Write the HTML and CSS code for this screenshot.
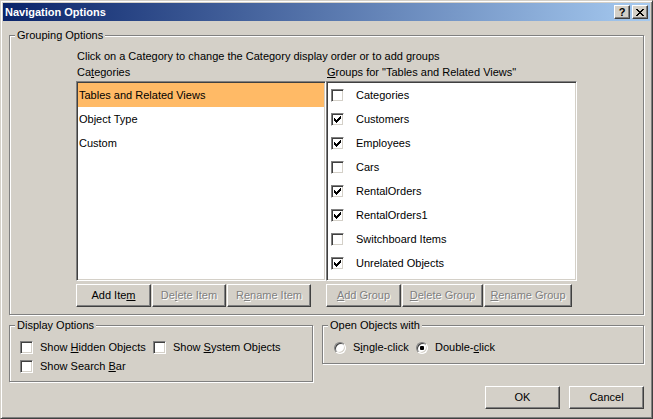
FILE: index.html
```html
<!DOCTYPE html>
<html>
<head>
<meta charset="utf-8">
<title>Navigation Options</title>
<link rel="stylesheet" href="styles.css">
</head>
<body>
<div class="window">
  <div class="titlebar">
    <span class="title">Navigation Options</span>
    <div class="tbtns">
      <div class="tbtn help">?</div>
      <div class="tbtn close">
        <svg width="8" height="7" viewBox="0 0 8 7" shape-rendering="crispEdges"><path d="M0 0h2v1h1v1h2v-1h1v-1h2v1h-1v1h-1v1h-1v1h1v1h1v1h1v1h-2v-1h-1v-1h-2v1h-1v1h-2v-1h1v-1h1v-1h1v-1h-1v-1h-1v-1h-1z" fill="#000"/></svg>
      </div>
    </div>
  </div>
  <div class="content">
    <div class="group grouping">
      <span class="legend">Grouping Options</span>
      <div class="intro">Click on a Category to change the Category display order or to add groups</div>
      <div class="cols">
        <div class="col col-left">
          <div class="label">Ca<u>t</u>egories</div>
          <div class="listbox">
            <div class="row sel">Tables and Related Views</div>
            <div class="row">Object Type</div>
            <div class="row">Custom</div>
          </div>
          <div class="btnrow">
            <div class="btn w75"><span>Add Ite<u>m</u></span></div>
            <div class="btn dis w74"><span>De<u>l</u>ete Item</span></div>
            <div class="btn dis w84"><span>R<u>e</u>name Item</span></div>
          </div>
        </div>
        <div class="col col-right">
          <div class="label"><u>G</u>roups for "Tables and Related Views"</div>
          <div class="listbox">
            <div class="row crow"><span class="chk"></span><span>Categories</span></div>
            <div class="row crow"><span class="chk on"></span><span>Customers</span></div>
            <div class="row crow"><span class="chk on"></span><span>Employees</span></div>
            <div class="row crow"><span class="chk"></span><span>Cars</span></div>
            <div class="row crow"><span class="chk on"></span><span>RentalOrders</span></div>
            <div class="row crow"><span class="chk on"></span><span>RentalOrders1</span></div>
            <div class="row crow"><span class="chk"></span><span>Switchboard Items</span></div>
            <div class="row crow"><span class="chk on"></span><span>Unrelated Objects</span></div>
          </div>
          <div class="btnrow">
            <div class="btn dis w75"><span><u>A</u>dd Group</span></div>
            <div class="btn dis w81"><span><u>D</u>elete Group</span></div>
            <div class="btn dis w88"><span><u>R</u>ename Group</span></div>
          </div>
        </div>
      </div>
    </div>
    <div class="lower">
      <div class="group display">
        <span class="legend">Display Options</span>
        <div class="optrow">
          <label class="opt w133"><span class="chk"></span><span>Show <u>H</u>idden Objects</span></label>
          <label class="opt"><span class="chk"></span><span>Show <u>S</u>ystem Objects</span></label>
        </div>
        <div class="optrow">
          <label class="opt"><span class="chk"></span><span>Show Search <u>B</u>ar</span></label>
        </div>
      </div>
      <div class="group openwith">
        <span class="legend">Open Objects with</span>
        <div class="optrow">
          <label class="opt w82"><span class="radio"></span><span>S<u>i</u>ngle-click</span></label>
          <label class="opt"><span class="radio on"></span><span>Double-<u>c</u>lick</span></label>
        </div>
      </div>
    </div>
    <div class="footer">
      <div class="btn w75"><span>OK</span></div>
      <div class="btn w75"><span>Cancel</span></div>
    </div>
  </div>
</div>
</body>
</html>
```

FILE: styles.css
```css
html, body {
  margin: 0;
  padding: 0;
  background: #D4D0C8;
}
body {
  font-family: "Liberation Sans", Arial, sans-serif;
  font-size: 11px;
  color: #000;
}
.window {
  width: 653px;
  height: 419px;
  box-sizing: border-box;
  border: 1px solid;
  border-color: #D4D0C8 #404040 #404040 #D4D0C8;
  box-shadow: inset 1px 1px 0 #fff, inset -1px -1px 0 #808080;
  padding: 2px;
  background: #D4D0C8;
  display: flex;
  flex-direction: column;
}
.titlebar {
  height: 18px;
  flex: none;
  display: flex;
  align-items: center;
  padding: 0 2px 0 2px;
  background: linear-gradient(to right, #0A246A, #A6CAF0);
}
.title {
  flex: 1;
  color: #fff;
  font-weight: bold;
  line-height: 13px;
}
.tbtns {
  display: flex;
  gap: 2px;
}
.tbtn {
  width: 16px;
  height: 14px;
  box-sizing: border-box;
  border: 1px solid;
  border-color: #fff #404040 #404040 #fff;
  box-shadow: inset -1px -1px 0 #808080;
  background: #D4D0C8;
  display: flex;
  align-items: center;
  justify-content: center;
}
.tbtn.help {
  font-weight: bold;
  font-size: 11px;
  line-height: 12px;
  padding-bottom: 1px;
}
.tbtn svg {
  display: block;
}
.content {
  padding: 14px 6px 0 6px;
}
.group {
  position: relative;
  box-sizing: border-box;
  border: 1px solid #808080;
  box-shadow: inset 1px 1px 0 #fff, 1px 1px 0 #fff;
}
.legend {
  position: absolute;
  top: -7px;
  left: 5px;
  padding: 0 2px;
  line-height: 13px;
  background: #D4D0C8;
}
.grouping {
  height: 280px;
  padding: 14px 66px 7px 66px;
}
.intro {
  line-height: 13px;
  padding-left: 1px;
}
.cols {
  display: flex;
}
.col-left {
  width: 250px;
}
.col-right {
  width: 251px;
}
.label {
  line-height: 13px;
  margin-top: 3px;
  margin-bottom: 2px;
  padding-left: 1px;
  white-space: nowrap;
}
.listbox {
  height: 200px;
  box-sizing: border-box;
  border: 1px solid;
  border-color: #808080 #fff #fff #808080;
  box-shadow: inset 1px 1px 0 #404040, inset -1px -1px 0 #D4D0C8;
  background: #fff;
  padding: 1px;
}
.row {
  height: 24px;
  line-height: 24px;
  padding-left: 1px;
  white-space: nowrap;
}
.row.sel {
  background: #FFBA66;
}
.crow {
  display: flex;
  align-items: center;
  padding-left: 0;
}
.crow .chk {
  margin-left: 3px;
  margin-right: 12px;
}
.chk {
  position: relative;
  flex: none;
  width: 13px;
  height: 13px;
  box-sizing: border-box;
  border: 1px solid;
  border-color: #808080 #fff #fff #808080;
  box-shadow: inset 1px 1px 0 #404040, inset -1px -1px 0 #D4D0C8;
  background: #fff;
  display: inline-block;
}
.chk.on::after {
  content: "";
  position: absolute;
  left: 2px;
  top: 2px;
  width: 7px;
  height: 7px;
  background: url("data:image/svg+xml;utf8,<svg xmlns='http://www.w3.org/2000/svg' width='7' height='7' shape-rendering='crispEdges'><path d='M0 2h1v3h-1z M1 3h1v3h-1z M2 4h1v3h-1z M3 3h1v3h-1z M4 2h1v3h-1z M5 1h1v3h-1z M6 0h1v3h-1z' fill='black'/></svg>") no-repeat;
}
.btnrow {
  display: flex;
  gap: 1px;
  margin-top: 3px;
}
.btn {
  height: 23px;
  box-sizing: border-box;
  border: 1px solid;
  border-color: #fff #404040 #404040 #fff;
  box-shadow: inset -1px -1px 0 #808080;
  background: #D4D0C8;
  display: flex;
  align-items: center;
  justify-content: center;
  white-space: nowrap;
  line-height: 13px;
}
.btn.dis {
  color: #808080;
  text-shadow: 1px 1px 0 #fff;
}
.w74 { width: 74px; }
.w75 { width: 75px; }
.w81 { width: 81px; }
.w84 { width: 84px; }
.w88 { width: 88px; }
.lower {
  display: flex;
  align-items: flex-start;
  margin-top: 10px;
}
.display {
  width: 304px;
  height: 57px;
  padding: 15px 0 0 10px;
}
.openwith {
  width: 322px;
  height: 39px;
  margin-left: 9px;
  padding: 15px 0 0 11px;
}
.optrow {
  display: flex;
  height: 13px;
  align-items: center;
  margin-bottom: 6px;
}
.opt {
  display: flex;
  align-items: center;
  white-space: nowrap;
  line-height: 13px;
}
.opt .chk {
  margin-right: 7px;
}
.w133 { width: 133px; }
.w82 { width: 82px; }
.radio {
  position: relative;
  flex: none;
  width: 12px;
  height: 12px;
  box-sizing: border-box;
  border-radius: 50%;
  border: 1px solid;
  border-color: #808080 #fff #fff #808080;
  box-shadow: inset 1px 1px 0 #404040, inset -1px -1px 0 #D4D0C8;
  background: #fff;
  margin-right: 7px;
}
.radio.on::after {
  content: "";
  position: absolute;
  left: 3px;
  top: 3px;
  width: 4px;
  height: 4px;
  border-radius: 1px;
  background: #000;
}
.footer {
  display: flex;
  justify-content: flex-end;
  gap: 9px;
  margin-top: 4px;
}
```
